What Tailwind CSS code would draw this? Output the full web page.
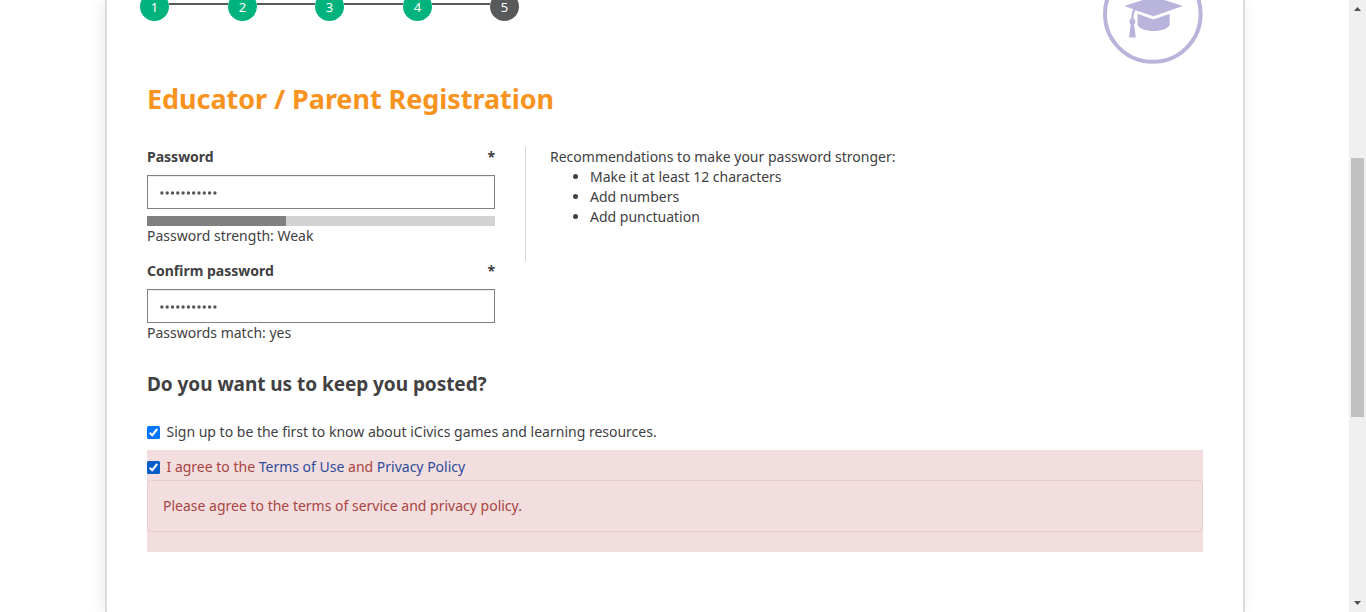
<!DOCTYPE html>
<html lang="en">
<head>
<meta charset="utf-8">
<title>Educator / Parent Registration</title>
<script src="https://cdn.jsdelivr.net/npm/@tailwindcss/browser@4"></script>
</head>
<body class="flex h-[612px] overflow-hidden bg-white font-['Noto_Sans','Open_Sans',sans-serif] text-sm leading-5 text-[#414042]">
<div class="flex h-full flex-1 pl-[105px]">
  <main class="h-[612px] w-[1140px] border-x-2 border-[#dcdcdc] bg-white px-10 shadow-[-2px_0_14px_rgba(0,0,0,0.09)]">
    <header class="flex h-16 justify-between">
      <ol class="-ml-[7px] -mt-[8px] flex h-[29px] items-center text-[13px] text-white">
        <li class="flex size-[29px] items-center justify-center rounded-full bg-[#00b27c]">1</li>
        <li class="mb-[5px] h-0.5 w-[59px] bg-[#58595b]"></li>
        <li class="flex size-[29px] items-center justify-center rounded-full bg-[#00b27c]">2</li>
        <li class="mb-[5px] h-0.5 w-[58px] bg-[#58595b]"></li>
        <li class="flex size-[29px] items-center justify-center rounded-full bg-[#00b27c]">3</li>
        <li class="mb-[5px] h-0.5 w-[59px] bg-[#58595b]"></li>
        <li class="flex size-[29px] items-center justify-center rounded-full bg-[#00b27c]">4</li>
        <li class="mb-[5px] h-0.5 w-[58px] bg-[#58595b]"></li>
        <li class="flex size-[29px] items-center justify-center rounded-full bg-[#58595b]">5</li>
      </ol>
      <svg class="h-16 w-[100px]" viewBox="0 0 100 64" fill="#b9b4db">
        <circle cx="49.8" cy="14" r="47.8" fill="none" stroke="#b9b4db" stroke-width="4"/>
        <path d="M21.3 6 50.5-3.500 80 6 50.500 16.300 32.500 10.300C30.800 12.500 30.500 15 30.500 18.600a3.300 3.300 0 0 1 .6 5.600L32.800 37.500H26L27.700 24.200a3.300 3.300 0 0 1 .6-5.600C28.300 14.600 28.800 11.500 30.400 9.200Z"/>
        <path d="M34.500 13.700 50.500 19.400 66.700 13.700V25C65 28.800 58.500 31 50.600 31S36.200 28.800 34.500 25Z"/>
      </svg>
    </header>
    <h1 class="mt-[15px] h-10 whitespace-nowrap text-[27px] leading-10 font-bold tracking-[-0.06px] text-[#f7931e]">Educator / Parent Registration</h1>
    <section class="mt-7 flex">
      <div class="w-[348px]">
        <label class="flex justify-between font-bold" for="pw"><span>Password</span><span>*</span></label>
        <div id="pw" class="mt-2 flex h-[34px] items-center border border-[#808080] pl-[11px] shadow-[inset_0_1px_1px_rgba(0,0,0,0.075)]">
          <svg class="mt-px h-1 w-[60px]" viewBox="0 0 60 4"><path d="M2.900 2h54" fill="none" stroke="#555" stroke-width="3.400" stroke-linecap="round" stroke-dasharray="0 5.300"/></svg>
        </div>
        <div class="mt-[7px] h-2.5 bg-[#d3d3d3]"><div class="h-full w-[139px] bg-[#808080]"></div></div>
        <p>Password strength: Weak</p>
        <label class="mt-[15px] flex justify-between font-bold" for="pw2"><span>Confirm password</span><span>*</span></label>
        <div id="pw2" class="mt-2 flex h-[34px] items-center border border-[#808080] pl-[11px] shadow-[inset_0_1px_1px_rgba(0,0,0,0.075)]">
          <svg class="mt-[2px] h-1 w-[60px]" viewBox="0 0 60 4"><path d="M2.900 2h54" fill="none" stroke="#555" stroke-width="3.400" stroke-linecap="round" stroke-dasharray="0 5.300"/></svg>
        </div>
        <p>Passwords match: yes</p>
      </div>
      <aside class="ml-[30px] h-[114px] border-l border-[#d3d3d3] pl-6">
        <p>Recommendations to make your password stronger:</p>
        <ul class="list-disc pl-10"><li>Make it at least 12 characters</li><li>Add numbers</li><li>Add punctuation</li></ul>
      </aside>
    </section>
    <h2 class="mt-[26px] h-[30px] whitespace-nowrap text-[19px] leading-[30px] font-bold tracking-[-0.05px]">Do you want us to keep you posted?</h2>
    <label class="mt-[23px] flex h-5 items-center">
      <svg class="mt-px mr-[6.500px] size-[13px]" viewBox="0 0 13 13"><rect width="13" height="13" rx="1.500" fill="#0075ff"/><path d="m2.700 6.700 2.500 2.500 5-6.200" fill="none" stroke="#fff" stroke-width="2"/></svg>
      <span>Sign up to be the first to know about iCivics games and learning resources.</span>
    </label>
    <section class="mt-2 h-[102px] bg-[#f2dede] pt-[7px] text-[#a94442]">
      <label class="flex h-5 items-center">
        <svg class="mt-px mr-[6.500px] size-[13px]" viewBox="0 0 13 13"><rect width="13" height="13" rx="1.500" fill="#005cc8"/><path d="m2.700 6.700 2.500 2.500 5-6.200" fill="none" stroke="#fff" stroke-width="2"/></svg>
        <span>I agree to the <a class="text-[#2e4b9b]">Terms of Use</a> and <a class="text-[#2e4b9b]">Privacy Policy</a></span>
      </label>
      <div class="mt-[3px] h-[52px] rounded border border-[#ebccd1] p-[15px]">Please agree to the terms of service and privacy policy.</div>
    </section>
  </main>
</div>
<div class="flex h-[612px] w-[17px] flex-col items-center justify-between bg-[#f0f0f0]">
  <svg class="h-[17px] w-[17px]" viewBox="0 0 17 17"><path d="m5 11 3.500-4 3.500 4Z" fill="#505050"/></svg>
  <div class="mt-[141px] mb-auto h-[259px] w-[13px] bg-[#c1c1c1]"></div>
  <svg class="h-[17px] w-[17px]" viewBox="0 0 17 17"><path d="m5 6 3.500 4L12 6Z" fill="#505050"/></svg>
</div>
</body>
</html>
